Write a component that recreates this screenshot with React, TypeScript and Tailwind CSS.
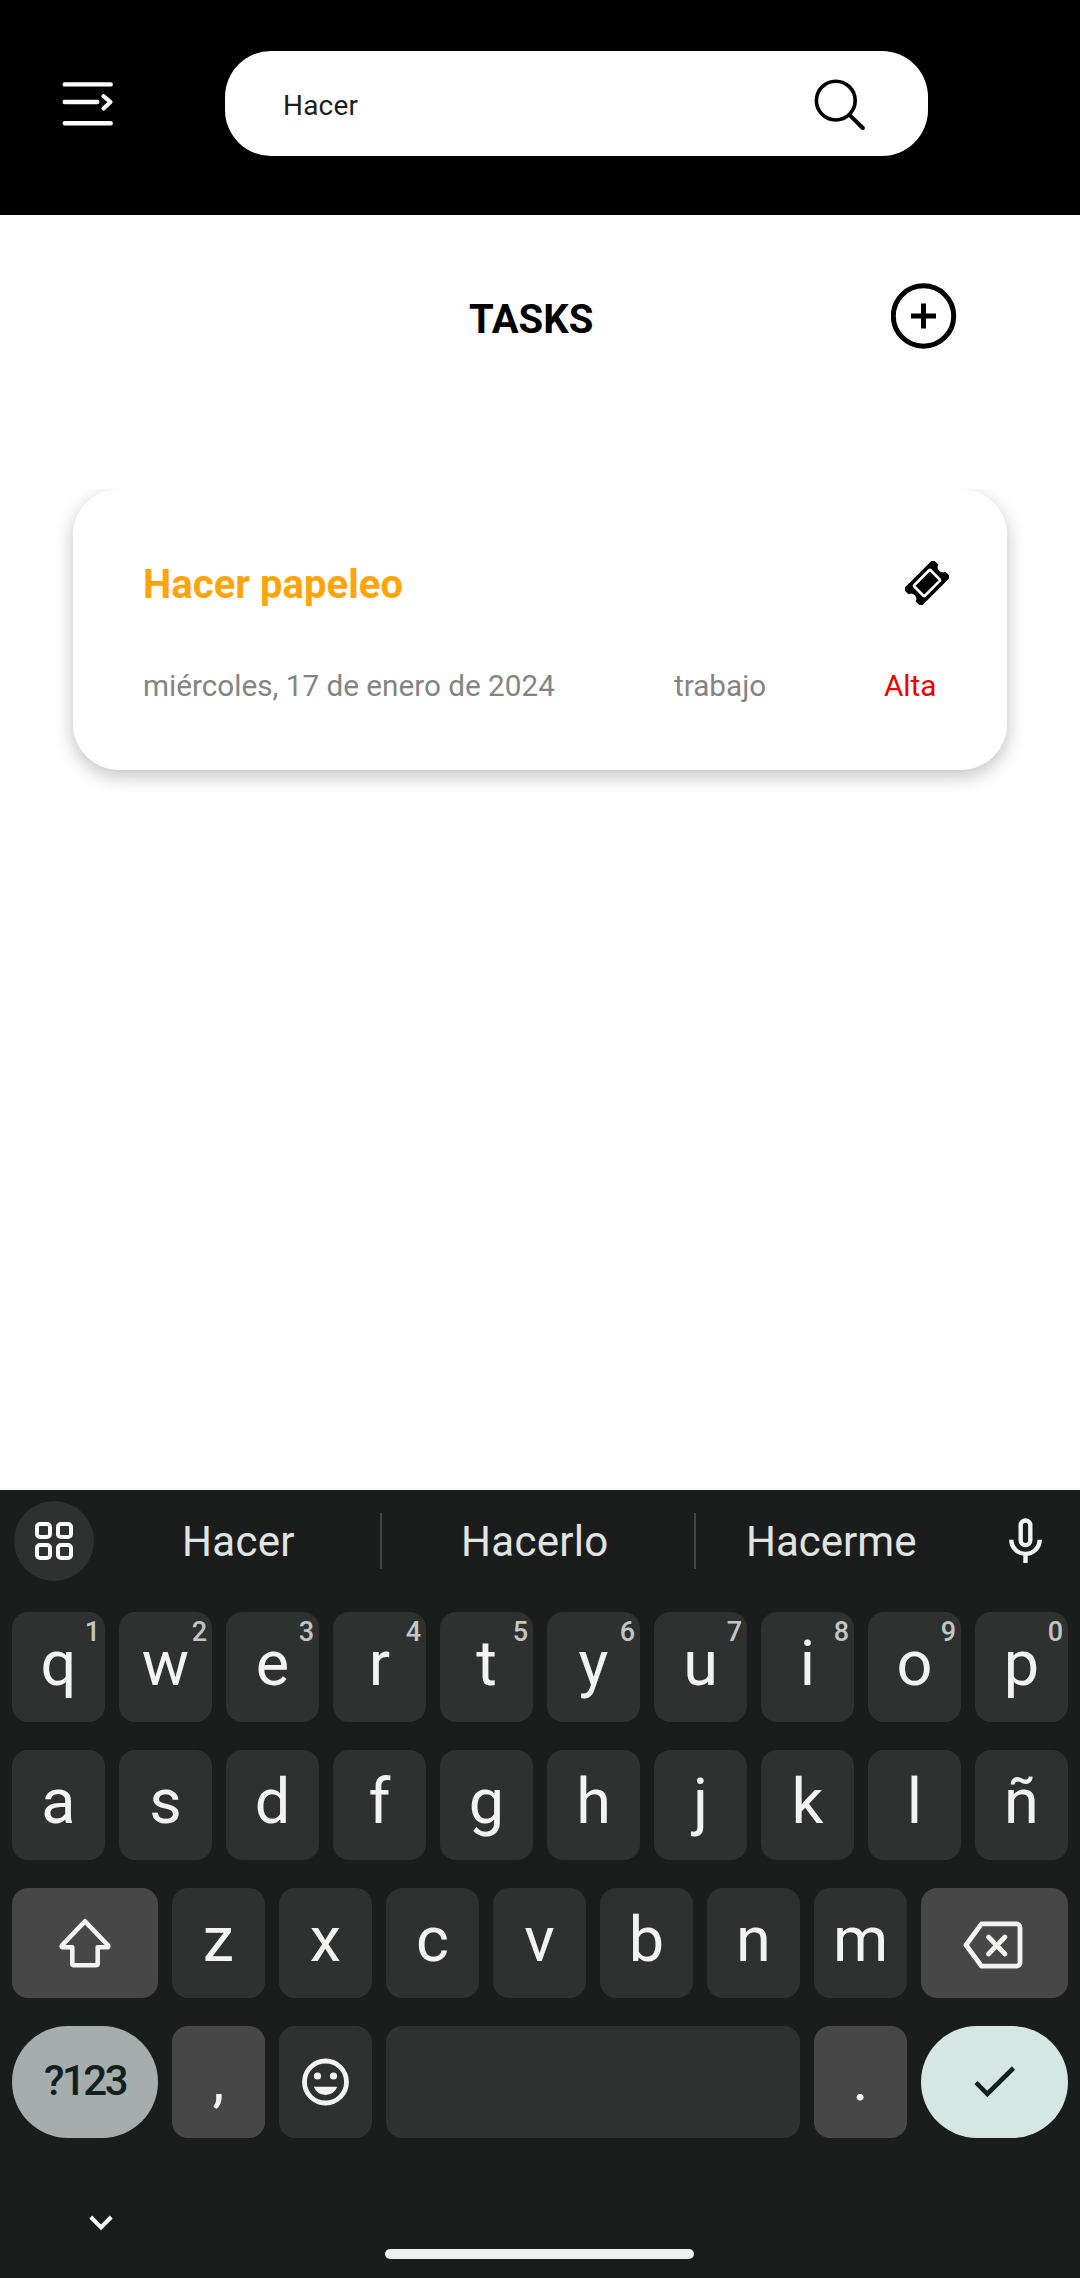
import type { ReactNode } from "react";

type LetterKey = { label: string; hint?: string };

const topRow: LetterKey[] = [
  { label: "q", hint: "1" },
  { label: "w", hint: "2" },
  { label: "e", hint: "3" },
  { label: "r", hint: "4" },
  { label: "t", hint: "5" },
  { label: "y", hint: "6" },
  { label: "u", hint: "7" },
  { label: "i", hint: "8" },
  { label: "o", hint: "9" },
  { label: "p", hint: "0" },
];
const homeRow: LetterKey[] = ["a", "s", "d", "f", "g", "h", "j", "k", "l", "ñ"].map((label) => ({ label }));
const bottomRow: LetterKey[] = ["z", "x", "c", "v", "b", "n", "m"].map((label) => ({ label }));

function MenuIcon() {
  return (
    <svg width="52" height="46" viewBox="0 0 52 46" fill="none" stroke="#fff" strokeWidth="4.4" strokeLinecap="round">
      <path d="M2.7 3.4h46M2.7 21h32.500M2.700 42.200h46" />
      <path d="M41.500 15.200l7 5.800-7 6.500" strokeWidth="4.200" strokeLinejoin="round" />
    </svg>
  );
}

function SearchIcon() {
  return (
    <svg width="52" height="52" viewBox="0 0 52 52" fill="none" stroke="#000" strokeWidth="3.600" strokeLinecap="round">
      <circle cx="21.800" cy="22.600" r="19.400" />
      <path d="M36.200 37.600L48.800 50" strokeWidth="4" />
    </svg>
  );
}

function AddIcon() {
  return (
    <svg width="66" height="66" viewBox="0 0 66 66" fill="none" stroke="#000" strokeWidth="5">
      <circle cx="32.500" cy="33" r="30.200" />
      <path d="M20 33h25M32.500 20.500v25" />
    </svg>
  );
}

function TicketIcon() {
  return (
    <svg width="44" height="44" viewBox="0 0 44 44">
      <g transform="rotate(-45 22 22)">
        <path
          d="M4 9.500h36a3 3 0 0 1 3 3v4.500a5.200 5.200 0 0 0 0 10v4.500a3 3 0 0 1-3 3h-36a3 3 0 0 1-3-3v-4.500a5.200 5.200 0 0 0 0-10v-4.500a3 3 0 0 1 3-3z"
          fill="#000"
        />
        <rect x="10.500" y="14.500" width="23" height="15" rx="1" fill="#000" stroke="#fff" strokeWidth="2.600" />
      </g>
    </svg>
  );
}

function GridIcon() {
  return (
    <svg width="38" height="38" viewBox="0 0 38 38" fill="none" stroke="#fdfdfd" strokeWidth="4">
      <rect x="2" y="2" width="13" height="13" rx="3" />
      <rect x="23" y="2" width="13" height="13" rx="3" />
      <rect x="2" y="23" width="13" height="13" rx="3" />
      <rect x="23" y="23" width="13" height="13" rx="3" />
    </svg>
  );
}

function MicIcon() {
  return (
    <svg width="34" height="46" viewBox="0 0 34 46" fill="none" stroke="#f1f3f1" strokeWidth="4.400">
      <rect x="11.700" y="2.500" width="9.600" height="24.600" rx="4.800" />
      <path d="M2.300 21.700a14.200 14.200 0 0 0 28.400 0M16.500 35.500v9.500" />
    </svg>
  );
}

function ShiftIcon() {
  return (
    <svg width="54" height="52" viewBox="0 0 54 52" fill="none" stroke="#f3f3f2" strokeWidth="4.600" strokeLinejoin="round">
      <path d="M27 4.300L3.800 28.500q-.6 1.800 1.200 1.800h9.300v16.200q0 1.800 1.800 1.800h21.800q1.800 0 1.800-1.800V30.300H49q1.800 0 1.200-1.800z" />
    </svg>
  );
}

function BackspaceIcon() {
  return (
    <svg width="60" height="48" viewBox="0 0 60 48" fill="none" stroke="#f3f3f2" strokeWidth="4.800">
      <path d="M18.500 2.800h35a3.500 3.500 0 0 1 3.500 3.500v35.400a3.500 3.500 0 0 1-3.500 3.500h-35L3 24z" strokeLinejoin="round" />
      <path d="M25.500 16l16.500 17M42 16L25.500 33" strokeLinecap="round" />
    </svg>
  );
}

function SmileIcon() {
  return (
    <svg width="48" height="48" viewBox="0 0 48 48">
      <circle cx="23.500" cy="24" r="21" fill="none" stroke="#f3f3f2" strokeWidth="4.800" />
      <circle cx="15.500" cy="18" r="3.600" fill="#f3f3f2" />
      <circle cx="31.500" cy="18" r="3.600" fill="#f3f3f2" />
      <path d="M11.800 28.800h23.400a12.500 12.500 0 0 1-23.400 0z" fill="#f3f3f2" />
    </svg>
  );
}

function Key({ label, hint }: LetterKey) {
  return (
    <div className="relative flex h-[110px] w-[93px] items-start justify-center rounded-2xl bg-[#2f3130] pt-5 text-[63px] leading-[63px] text-[#f3f3f2]">
      <span>{label}</span>
      {hint && (
        <span className="absolute top-[7px] right-[5px] text-[27px] leading-[27px] font-medium text-[#c4c6c5]">{hint}</span>
      )}
    </div>
  );
}

function ActionKey({ className, children }: { className: string; children: ReactNode }) {
  return <div className={`flex items-center justify-center ${className}`}>{children}</div>;
}

export default function App() {
  return (
    <div className="flex h-[2278px] w-[1080px] flex-col overflow-hidden bg-[#fefefe] font-['Roboto',sans-serif]">
      <header className="flex h-[215px] shrink-0 items-start bg-black pt-[51px] pl-[62px]">
        <div className="mt-[30px] w-[163px]">
          <MenuIcon />
        </div>
        <div className="flex h-[105px] w-[703px] items-center justify-between rounded-[46px] bg-white pr-[62px] pl-[58px]">
          <span className="pt-1 text-[28px] leading-8 tracking-[0.2px] text-[#1d1d1d]">Hacer</span>
          <SearchIcon />
        </div>
      </header>

      <main className="flex flex-1 flex-col">
        <div className="flex pt-[68px] pl-[469px]">
          <h1 className="mt-[17px] w-[422px] text-[40px] leading-10 font-bold text-black">TASKS</h1>
          <AddIcon />
        </div>

        <div className="mt-[140px] overflow-hidden px-[73px] pb-10">
          <article className="h-[281px] rounded-[46px] bg-white pr-[58px] pl-[70px] shadow-[0_6px_18px_rgba(0,0,0,0.24)]">
            <div className="flex justify-between pt-[72px]">
              <h2 className="mt-1 text-[40px] leading-10 font-bold tracking-[0.05px] whitespace-nowrap text-[#ffa50a]">
                Hacer papeleo
              </h2>
              <TicketIcon />
            </div>
            <div className="mt-[66px] flex text-[29.7px] leading-[30px] whitespace-nowrap text-[#848484]">
              <span className="w-[531px]">miércoles, 17 de enero de 2024</span>
              <span className="w-[210px]">trabajo</span>
              <span className="text-[#f20000]">Alta</span>
            </div>
          </article>
        </div>
      </main>

      <section className="flex h-[790px] shrink-0 flex-col border-t-2 border-[#f7f7f7] bg-[#1b1d1c]">
        <div className="flex h-[122px] items-start text-[42px] leading-[42px] tracking-[0.3px] text-[#e1e4e2]">
          <div className="mt-[11px] ml-3.5 flex size-20 items-center justify-center rounded-full bg-[#2f3130]">
            <GridIcon />
          </div>
          <span className="mt-[31px] ml-[88px] w-[198px]">Hacer</span>
          <div className="mt-[23px] h-14 w-0.5 bg-[#434645]" />
          <span className="mt-[31px] ml-[79px] w-[233px]">Hacerlo</span>
          <div className="mt-[23px] h-14 w-0.5 bg-[#434645]" />
          <span className="mt-[31px] ml-[50px] w-[263px] tracking-normal">Hacerme</span>
          <div className="mt-7">
            <MicIcon />
          </div>
        </div>

        <div className="flex flex-col gap-7 px-3">
          <div className="flex gap-3.5">
            {topRow.map((key) => (
              <Key key={key.label} {...key} />
            ))}
          </div>
          <div className="flex gap-3.5">
            {homeRow.map((key) => (
              <Key key={key.label} {...key} />
            ))}
          </div>
          <div className="flex gap-3.5">
            <ActionKey className="h-[110px] w-[146px] rounded-2xl bg-[#474747]">
              <ShiftIcon />
            </ActionKey>
            {bottomRow.map((key) => (
              <Key key={key.label} {...key} />
            ))}
            <ActionKey className="h-[110px] w-[147px] rounded-2xl bg-[#474747] pt-1 pr-1">
              <BackspaceIcon />
            </ActionKey>
          </div>
          <div className="flex gap-3.5">
            <ActionKey className="h-28 w-[146px] rounded-full bg-[#a5aeac] pb-0.5 text-[42px] leading-[42px] font-medium tracking-[-2.5px] text-[#12201f]">
              ?123
            </ActionKey>
            <ActionKey className="h-28 w-[93px] rounded-2xl bg-[#474747] pb-1 text-[60px] leading-[60px] text-[#f3f3f2]">
              ,
            </ActionKey>
            <ActionKey className="h-28 w-[93px] rounded-2xl bg-[#2f3130]">
              <SmileIcon />
            </ActionKey>
            <div className="h-28 w-[414px] rounded-2xl bg-[#2f3130]" />
            <ActionKey className="h-28 w-[93px] rounded-2xl bg-[#474747] pb-1 text-[60px] leading-[60px] text-[#f3f3f2]">
              .
            </ActionKey>
            <ActionKey className="h-28 w-[147px] rounded-full bg-[#d5e7e2]">
              <svg width="42" height="32" viewBox="0 0 42 32" fill="none" stroke="#12201f" strokeWidth="4.600">
                <path d="M2 16.500l11.300 11.500L39.500 2" />
              </svg>
            </ActionKey>
          </div>
        </div>

        <div className="mt-[77px] pl-[89px]">
          <svg width="24" height="16" viewBox="0 0 24 16" fill="none" stroke="#fff" strokeWidth="4">
            <path d="M1.800 2l10.200 10.300L22.200 2" />
          </svg>
        </div>
        <div className="mt-[18px] ml-[385px] h-2.5 w-[309px] rounded-full bg-[#edf0ef]" />
      </section>
    </div>
  );
}
